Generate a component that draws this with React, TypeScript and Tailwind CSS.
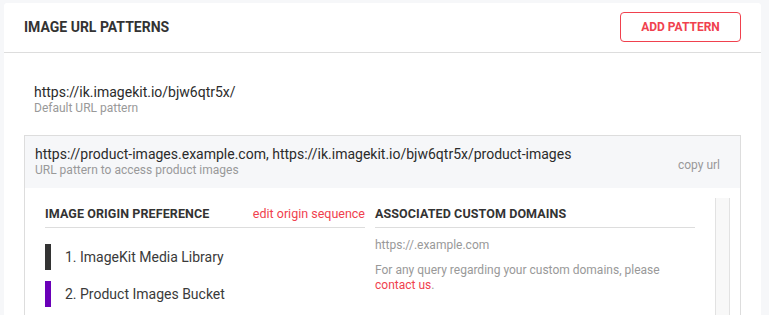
import { ReactNode } from 'react'

interface Origin {
  label: string
  color: string
}

const origins: Origin[] = [
  { label: '1. ImageKit Media Library', color: 'bg-[#333333]' },
  { label: '2. Product Images Bucket', color: 'bg-[#6a00b8]' },
]

function SectionTitle({ children, action }: { children: ReactNode; action?: ReactNode }) {
  return (
    <div className="flex items-center justify-between h-[30px] border-b border-[#dddddd] pt-[3px]">
      <span className="text-[12.5px] font-bold text-[#333333] tracking-[0.1px]">{children}</span>
      {action}
    </div>
  )
}

export default function App() {
  return (
    <div
      className="h-[315px] bg-[#f6f7f9] pt-[3px] pl-[4px] pr-[8px] overflow-hidden"
      style={{ fontFamily: 'Roboto, "Liberation Sans", sans-serif' }}
    >
      <div className="bg-white rounded-t-[3px] h-[330px]">
        {/* Header */}
        <div className="flex items-center justify-between h-[50px] border-b border-[#dddddd] pl-[20px] pr-[20px]">
          <h2 className="text-[14px] font-bold text-[#333333] mt-[-1px]">IMAGE URL PATTERNS</h2>
          <button className="w-[121px] h-[30px] border border-[#f0414e] rounded-[4px] text-[12px] font-bold text-[#f0414e] mt-[-2px]">
            ADD PATTERN
          </button>
        </div>

        {/* Body */}
        <div className="px-[20px]">
          <div className="pl-[10px] pt-[31px] h-[82px]">
            <div className="text-[14px] leading-[17px] text-[#2b2b2b]">https://ik.imagekit.io/bjw6qtr5x/</div>
            <div className="text-[12px] leading-[14px] text-[#999999]">Default URL pattern</div>
          </div>

          <div className="border border-[#dddddd] w-[717px]">
            <div className="bg-[#f6f7f9] h-[52px] flex items-start justify-between pl-[10px] pr-[20px] pt-[10px]">
              <div>
                <div className="text-[14px] leading-[17px] text-[#2b2b2b]">
                  https://product-images.example.com, https://ik.imagekit.io/bjw6qtr5x/product-images
                </div>
                <div className="text-[12px] leading-[15px] text-[#999999]">URL pattern to access product images</div>
              </div>
              <span className="text-[12px] text-[#999999] mt-[10px]">copy url</span>
            </div>

            <div className="flex pl-[20px] pt-[10px] h-[140px]">
              <div className="w-[320px]">
                <SectionTitle action={<span className="text-[12.5px] text-[#f0414e]">edit origin sequence</span>}>
                  IMAGE ORIGIN PREFERENCE
                </SectionTitle>
                <ul className="pt-[16px] flex flex-col gap-[11px]">
                  {origins.map((origin, index) => (
                    <li key={index} className="flex items-center h-[26px]">
                      <span className={`w-[6px] h-[26px] ${origin.color}`} />
                      <span className="ml-[14px] text-[14px] text-[#3a3a3a]">{origin.label}</span>
                    </li>
                  ))}
                </ul>
              </div>

              <div className="w-[320px] ml-[10px]">
                <SectionTitle>ASSOCIATED CUSTOM DOMAINS</SectionTitle>
                <div className="pt-[10px] text-[12px] leading-[15px] text-[#999999]">https://.example.com</div>
                <p className="pt-[10px] text-[12px] leading-[15px] text-[#999999]">
                  For any query regarding your custom domains, please
                  <br />
                  <span className="text-[#f0414e]">contact us</span>.
                </p>
              </div>

              {/* Scroll track */}
              <div className="w-[15px] ml-[20px] border-x border-[#e2e2e2] bg-[#f8f8f8]" />
            </div>
          </div>
        </div>
      </div>
    </div>
  )
}
